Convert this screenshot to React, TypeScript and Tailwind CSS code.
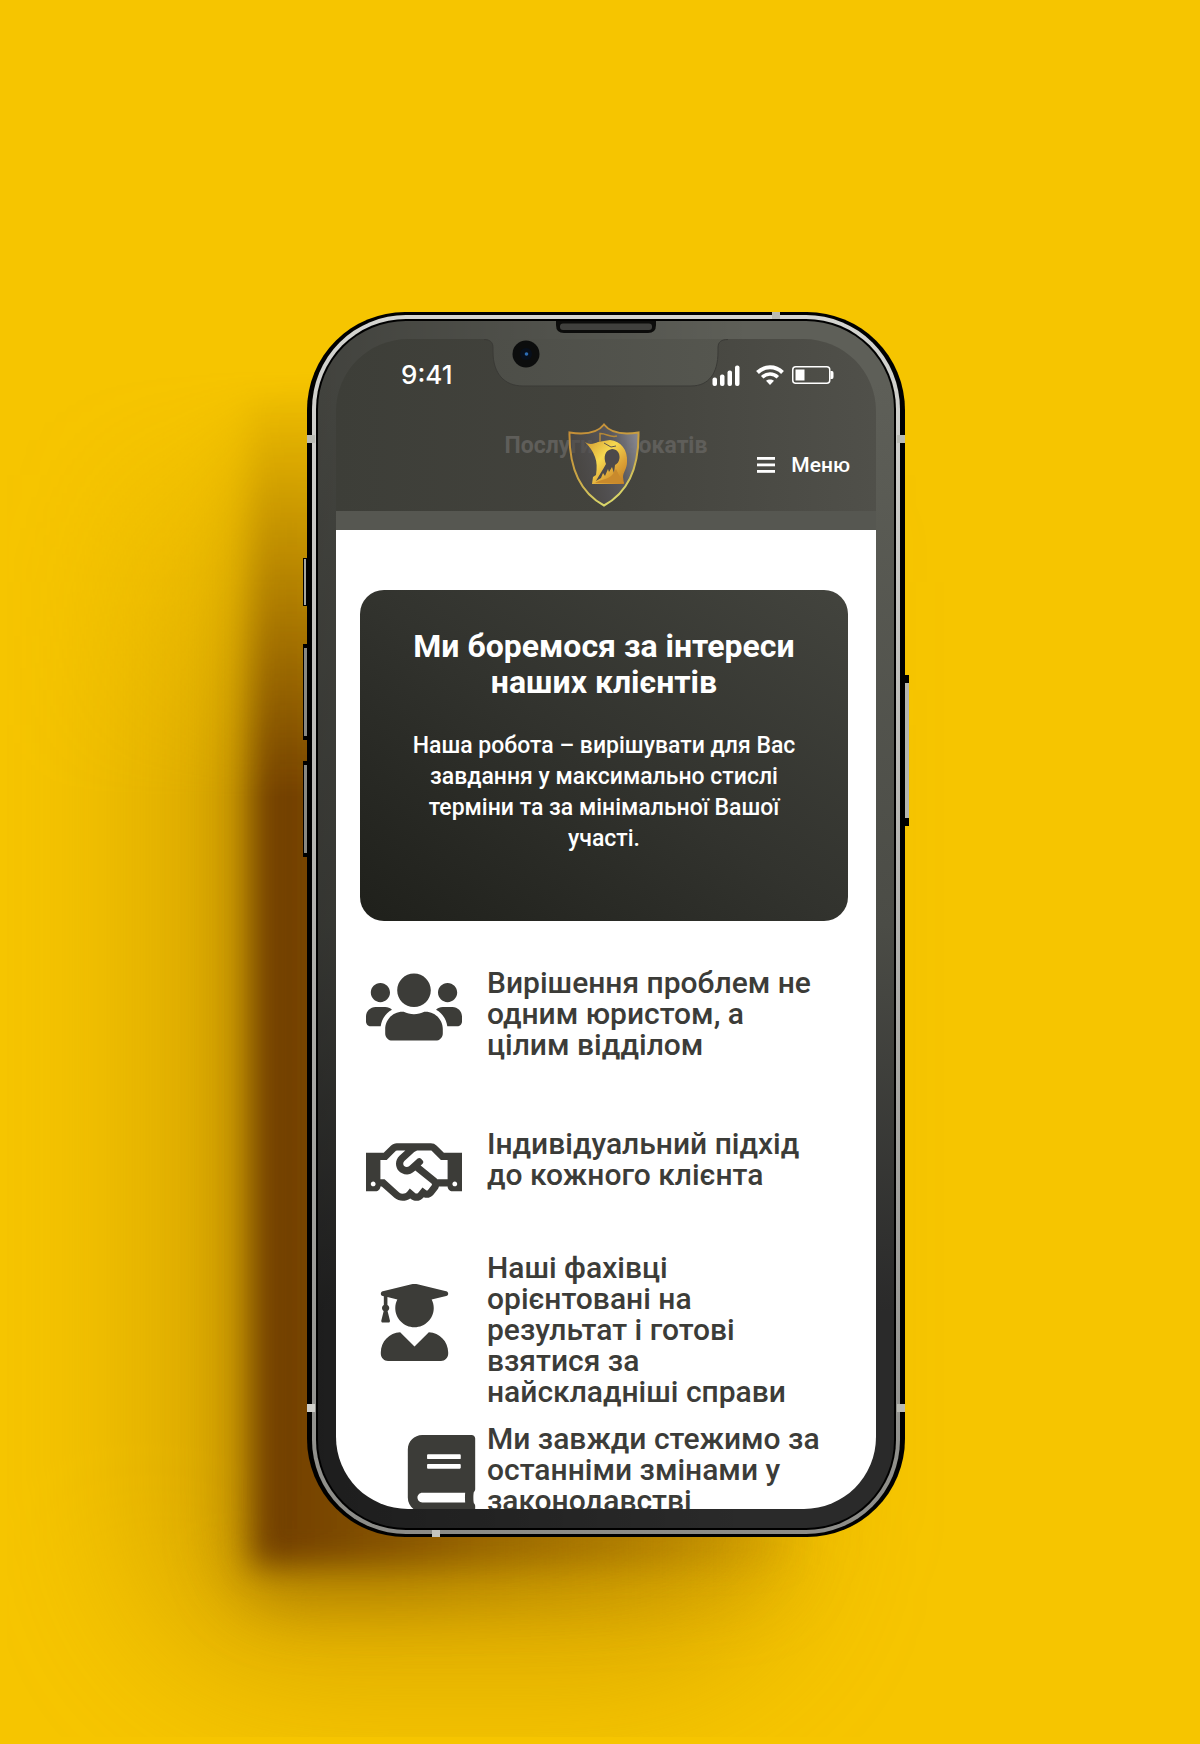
import { FaBook, FaRegHandshake, FaUserGraduate, FaUsers } from "react-icons/fa";
import type { IconType } from "react-icons";

const benefits: { icon: IconType; text: string; row: string; box: string; size: string }[] = [
  {
    icon: FaUsers,
    text: "Вирішення проблем не одним юристом, а цілим відділом",
    row: "mt-[46px]",
    box: "justify-center",
    size: "size-24 -mt-2 -mb-4",
  },
  {
    icon: FaRegHandshake,
    text: "Індивідуальний підхід до кожного клієнта",
    row: "mt-17",
    box: "justify-center",
    size: "size-24 -mt-1 -mb-10",
  },
  {
    icon: FaUserGraduate,
    text: "Наші фахівці орієнтовані на результат і готові взятися за найскладніші справи",
    row: "mt-[62px]",
    box: "justify-center",
    size: "size-[77px] mt-8",
  },
  {
    icon: FaBook,
    text: "Ми завжди стежимо за останніми змінами у законодавстві",
    row: "mt-4",
    box: "justify-end",
    size: "size-[77px] mt-3 -mr-3.5",
  },
];

function ShieldLogo() {
  return (
    <svg viewBox="0 0 72 84" className="h-[84px] w-[72px]" aria-label="Логотип" role="img">
      <defs>
        <linearGradient id="gold" x1="0" y1="0" x2="1" y2="1">
          <stop offset="0" stopColor="#d29a30" />
          <stop offset="0.4" stopColor="#f6d850" />
          <stop offset="0.7" stopColor="#dca236" />
          <stop offset="1" stopColor="#c07a20" />
        </linearGradient>
        <linearGradient id="rim" x1="0" y1="0" x2="0.4" y2="1">
          <stop offset="0" stopColor="#c48a34" />
          <stop offset="0.6" stopColor="#c9a545" />
          <stop offset="1" stopColor="#d8d468" />
        </linearGradient>
        <linearGradient id="steel" x1="0" y1="0.3" x2="1" y2="0">
          <stop offset="0" stopColor="#4c4846" stopOpacity="0.6" />
          <stop offset="0.6" stopColor="#5b5a60" stopOpacity="0.9" />
          <stop offset="1" stopColor="#8f9099" />
        </linearGradient>
      </defs>
      <path
        d="M36 1.5C31 8 21 12.500 1.500 9.500C1 41 9 68 36 82.500C63 68 71 41 70.500 9.500C51 12.500 41 8 36 1.500Z"
        fill="url(#steel)"
        stroke="url(#rim)"
        strokeWidth="2"
      />
      <path d="M10 61.500H61" stroke="url(#gold)" strokeWidth="2" />
      <path
        d="M17 19C21 22 26 21 30 19L42 17C53 18 60 27 59 39C59 46 55 49 55 54L56 61H24L25 54L28 52C29 45 29 39 27 34C25 28 21 23 17 19Z"
        fill="url(#gold)"
      />
      <path
        d="M44 26C49 26 52 30 51.500 35C51 39 49 41 47 42L46 50L44 44L41 49L40 46L37 53L35 50L33 55L28 58C31 52 35 47 38 41C35 34 37 27 44 26Z"
        fill="#4d494a"
      />
      <path d="M36 20L43 24L48 23" stroke="#5b5550" strokeWidth="1" fill="none" />
      <path d="M27 60C33 56 40 57 45 51L48 46L51 52L56 60Z" fill="#c98a2c" />
      <path d="M32 19V10.500C38 10 42 15 49 13" stroke="#b78936" strokeWidth="1.500" fill="none" />
    </svg>
  );
}

function StatusIcons() {
  return (
    <div className="flex items-center gap-4 text-white">
      <svg viewBox="0 0 28 21" className="h-[21px] w-7" fill="currentColor" aria-label="Сигнал">
        <rect x="0.500" y="12.500" width="4.500" height="8.500" rx="2" />
        <rect x="8" y="9.500" width="4.500" height="11.500" rx="2" />
        <rect x="15.500" y="5.500" width="4.500" height="15.500" rx="2" />
        <rect x="23" y="0.500" width="4.500" height="20.500" rx="2" />
      </svg>
      <div className="flex items-center gap-2">
        <svg viewBox="0 0 28 20" className="h-5 w-7" aria-label="Wi-Fi">
          <g fill="none" stroke="currentColor" strokeWidth="4">
            <path d="M1.500 7.500C8.500 0.600 19.500 0.600 26.500 7.500" />
            <path d="M6.200 12.200C10.600 8 17.400 8 21.800 12.200" strokeWidth="3.600" />
          </g>
          <path d="M14 20L10 15.800C12.300 13.900 15.700 13.900 18 15.800Z" fill="currentColor" />
        </svg>
        <svg viewBox="0 0 42 18" className="h-[18px] w-[42px]" aria-label="Батарея">
          <rect x="0.750" y="0.750" width="37" height="16.500" rx="3" fill="none" stroke="currentColor" strokeWidth="1.500" />
          <rect x="3.500" y="3.500" width="9" height="11" fill="currentColor" />
          <path d="M38.500 5H40Q41.500 5 41.500 7V11Q41.500 13 40 13H38.500Z" fill="currentColor" />
        </svg>
      </div>
    </div>
  );
}

function PhoneShadow() {
  return (
    <div
      aria-hidden="true"
      className="pointer-events-none absolute -inset-x-[300px] top-0 -bottom-[200px] mask-[linear-gradient(to_bottom,transparent_4%,rgba(0,0,0,0.5)_19%,black_34%)]"
    >
      <div className="absolute inset-y-[60px] right-[420px] left-[130px] rounded-[160px] bg-[#b88400]/45 blur-[70px]" />
      <div className="absolute top-[60px] right-[400px] bottom-[130px] left-[224px] rounded-[60px] bg-linear-to-r from-[#946600]/60 from-30% to-[#b88800]/10 blur-[30px]" />
      <div className="absolute top-[80px] right-[400px] bottom-[172px] left-[246px] bg-linear-to-r from-[#6b3800]/90 from-5% via-[#8f5c00]/70 via-45% to-[#b88800]/0 blur-[15px]" />
    </div>
  );
}

function Hardware() {
  return (
    <div aria-hidden="true" className="pointer-events-none absolute inset-y-0 -inset-x-1 flex items-start justify-between">
      <div className="mt-[246px] flex flex-col">
        <div className="h-12 w-1 border border-black bg-[#a5a5a0]" />
        <div className="mt-[38px] h-24 w-1 border-y-4 border-l border-black bg-[#888883]" />
        <div className="mt-[21px] h-24 w-1 border-y-4 border-l border-black bg-[#888883]" />
      </div>
      <div className="mt-[363px] h-[151px] w-1 border-y-8 border-black bg-[#b5b5b0]" />
    </div>
  );
}

function AntennaLines() {
  return (
    <div aria-hidden="true" className="pointer-events-none absolute inset-0">
      <div className="absolute inset-x-0 top-[123px] flex justify-between">
        <div className="size-2 bg-[#b9bab3]" />
        <div className="size-2 bg-[#b9bab3]" />
      </div>
      <div className="absolute inset-x-0 bottom-[125px] flex justify-between">
        <div className="size-2 bg-[#d0d0cb]" />
        <div className="size-2 bg-[#b9bab3]" />
      </div>
      <div className="absolute top-0 right-[125px] h-[7px] w-2 bg-[#b9bab3]" />
      <div className="absolute bottom-0 left-[125px] h-[7px] w-2 bg-[#c5c5c0]" />
    </div>
  );
}

function Notch() {
  return (
    <div aria-hidden="true" className="pointer-events-none absolute inset-x-0 top-0 flex justify-center">
      <svg viewBox="0 0 250 68" className="h-[68px] w-[250px]">
        <defs>
          <linearGradient id="notch" x1="0" y1="0" x2="1" y2="0">
            <stop offset="0" stopColor="#4d4e48" />
            <stop offset="1" stopColor="#55564f" />
          </linearGradient>
        </defs>
        <path
          d="M3 18C9 18.500 12 21 12 27V31C12 52 23 65 42 65H210C228 65 237 52 237 31V27C237 21 240 18.500 247 18Z"
          fill="url(#notch)"
        />
        <path
          d="M3 18.500C9 18.500 12 21 12 27V31C12 52 23 65 42 65H210C228 65 237 52 237 31V27C237 21 240 18.500 247 18.500"
          fill="none"
          stroke="#3a3a36"
        />
        <path d="M75 0V4Q75 12 83 12H167Q175 12 175 4V0Z" fill="#0c0c0b" />
        <rect x="79" y="2.500" width="92" height="6.500" rx="3" fill="#40403d" />
        <circle cx="45" cy="33" r="13.500" fill="#0c0d0d" />
        <circle cx="45" cy="33" r="6" fill="#070f1c" />
        <circle cx="45.500" cy="33" r="1.800" fill="#2d6db5" />
      </svg>
    </div>
  );
}

function Header() {
  return (
    <header className="relative h-[191px] shrink-0 border-b-[19px] border-[#565751] bg-linear-to-r from-[#3d3e38] via-[#43433d] to-[#50504a] text-white">
      <p className="absolute inset-x-0 top-[93px] text-center text-[23px] leading-7 font-bold text-[#5f5e5a]">
        Послуги адвокатів
      </p>
      <div className="relative flex items-center justify-between pt-[22px] pr-[42px] pl-[65px]">
        <time className="font-['Inter'] text-[26px] leading-7 font-medium">9:41</time>
        <StatusIcons />
      </div>
      <div className="relative mt-[34px] mr-1 grid grid-cols-[1fr_auto_1fr] items-center">
        <a href="#home" className="col-start-2">
          <ShieldLogo />
        </a>
        <button type="button" className="mr-[22px] flex items-center gap-4 justify-self-end text-[21px] leading-7 font-medium">
          <svg viewBox="0 0 18 16" className="h-4 w-[18px]" fill="currentColor" aria-hidden="true">
            <rect width="18" height="2.800" />
            <rect y="6.500" width="18" height="2.800" />
            <rect y="13" width="18" height="2.800" />
          </svg>
          Меню
        </button>
      </div>
    </header>
  );
}

export default function App() {
  return (
    <div className="flex min-h-screen justify-center overflow-hidden bg-[#f6c500] pt-[312px] pr-5 pb-[207px] pl-8 font-['Roboto',sans-serif]">
      <div className="relative w-full max-w-[598px]">
        <PhoneShadow />
        <Hardware />
        <div className="relative rounded-[98px] bg-black px-[5px] py-[3px]">
          <div className="rounded-[94px] bg-linear-to-b from-[#d4d4d0] via-[#b0b0ac] to-[#8c8c88] p-1">
            <div className="rounded-[90px] bg-black p-[2px]">
              <div className="relative rounded-[88px] bg-[linear-gradient(to_right,rgba(0,0,0,0.3),transparent_75%),linear-gradient(to_bottom,#5e5f58_5%,#4b4c46_50%,#2a2a2a_82%)] px-[18px] pt-[18px] pb-[19px]">
                <main className="flex h-[1170px] flex-col overflow-hidden rounded-[72px]">
                  <Header />
                  <div className="flex-1 bg-white pt-15">
                    <section className="mr-7 ml-6 rounded-3xl bg-linear-to-tr from-[#1f201b] via-[#32332e] to-[#43443e] px-12 pt-[38px] pb-[67px] text-center text-white">
                      <h1 className="text-[32px] leading-9 font-bold">Ми боремося за інтереси наших клієнтів</h1>
                      <p className="mt-[30px] text-[23px] leading-[31px] font-medium">
                        Наша робота – вирішувати для Вас завдання у максимально стислі терміни та за мінімальної Вашої участі.
                      </p>
                    </section>
                    <ul className="px-[26px] text-[#3c3c38]">
                      {benefits.map(({ icon: Icon, text, row, box, size }) => (
                        <li key={text} className={`flex gap-[21px] ${row}`}>
                          <span className={`flex w-26 shrink-0 items-start ${box}`}>
                            <Icon className={size} aria-hidden="true" />
                          </span>
                          <h2 className="max-w-[340px] text-[30px] leading-[31px] font-medium">{text}</h2>
                        </li>
                      ))}
                    </ul>
                  </div>
                </main>
                <Notch />
              </div>
            </div>
          </div>
          <AntennaLines />
        </div>
      </div>
    </div>
  );
}
